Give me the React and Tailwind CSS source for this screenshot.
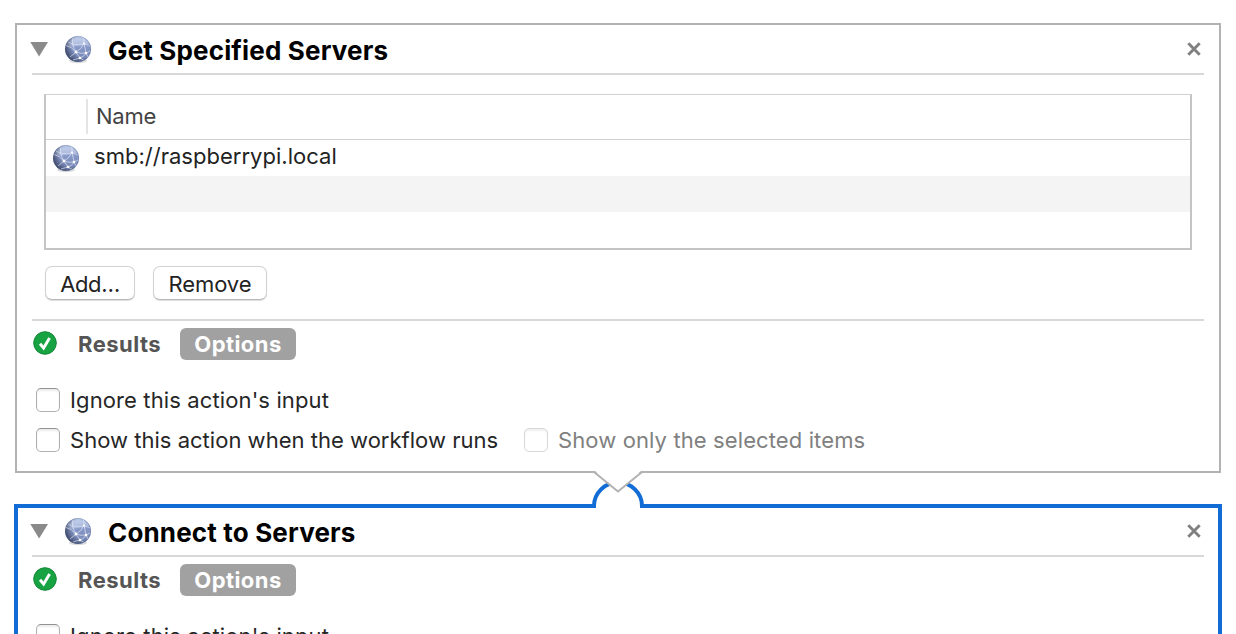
import React from "react";

function Globe() {
  return (
    <svg className="block h-7 w-7 shrink-0 overflow-visible" viewBox="0 0 28 28" fill="none">
      <defs>
        <linearGradient id="globe-body" x1="0.45" y1="0" x2="0.55" y2="1">
          <stop offset="0" stopColor="#bccae8" />
          <stop offset="0.45" stopColor="#8798c6" />
          <stop offset="1" stopColor="#7484b2" />
        </linearGradient>
        <radialGradient id="globe-shade" cx="0.72" cy="0.38" r="0.78">
          <stop offset="0.55" stopColor="#2b3552" stopOpacity="0" />
          <stop offset="1" stopColor="#252c45" stopOpacity="0.8" />
        </radialGradient>
        <clipPath id="globe-clip">
          <circle cx="14" cy="14" r="13" />
        </clipPath>
      </defs>
      <ellipse cx="14" cy="25.8" rx="9" ry="2.4" fill="#000" opacity="0.14" />
      <circle cx="14" cy="14" r="13" fill="url(#globe-body)" />
      <g clipPath="url(#globe-clip)">
        <path d="M2 9C8 2 20 1 26 9L20 10L6 12Z" fill="#dce5f8" opacity="0.35" />
        <circle cx="14" cy="14" r="13" fill="url(#globe-shade)" />
        <g stroke="#eef3ff" strokeWidth="0.8" opacity="0.75">
          <path d="M1 10Q8 12 12 17Q18 14 20 8Q21 4 18 1" />
          <path d="M9 3Q7 9 12 17L16 23Q20 22 22 18L20 8" />
          <path d="M12 17Q17 19 22 18L26 16M12 17L6 22M16 23L9 25M16 23L21 26M22 18L24 22" />
          <path d="M4 7Q10 11 20 9L26 11" strokeWidth="0.6" />
        </g>
        <g fill="#fff">
          <circle cx="12" cy="17" r="1.4" />
          <circle cx="20" cy="8.5" r="1" />
          <circle cx="22" cy="18" r="1.3" />
          <circle cx="16" cy="23" r="1.3" />
        </g>
      </g>
      <circle cx="14" cy="14" r="12.7" stroke="#55638e" strokeWidth="0.6" opacity="0.5" />
    </svg>
  );
}

function Header({ title }) {
  return (
    <div className="mx-[15px] flex h-[50px] items-center border-b-2 border-[#d8d8d8]">
      <svg className="-ml-0.5 h-4 w-[18px]" viewBox="0 0 18 16">
        <path d="M0.3 1H18L9.1 15.5Z" fill="#8a8a8a" />
      </svg>
      <div className="ml-4">
        <Globe />
      </div>
      <h2 className="mt-[3px] ml-4 text-[26px] leading-8 font-bold tracking-[0.16px] whitespace-nowrap text-black">{title}</h2>
      <button className="mr-[3px] ml-auto block" aria-label="Close">
        <svg className="block h-[14px] w-[14px]" viewBox="0 0 14 14">
          <path d="M1.3 1.3L12.7 12.7M12.7 1.3L1.3 12.7" stroke="#808080" strokeWidth="2.9" />
        </svg>
      </button>
    </div>
  );
}

function ResultsBar() {
  return (
    <div className="flex h-8 items-center pl-4">
      <svg className="-mt-0.5 block h-6 w-6" viewBox="0 0 24 24">
        <circle cx="12" cy="12" r="11.3" fill="#18a343" stroke="#158638" strokeWidth="1" />
        <path d="M7 12.8L10.6 17L16.6 6.9" stroke="#fff" strokeWidth="2.9" fill="none" />
      </svg>
      <span className="ml-[21px] w-[102px] text-[22px] leading-8 font-bold tracking-[0.48px] text-[#555]">Results</span>
      <span className="flex h-8 w-[116px] items-center justify-center rounded-md bg-[#a1a1a1] text-[22px] leading-8 font-bold tracking-[0.42px] text-white">
        Options
      </span>
    </div>
  );
}

function Check({ label, disabled, textClass }) {
  return (
    <label className="flex h-6 items-center whitespace-nowrap">
      <span
        className={
          "block h-6 w-6 shrink-0 rounded-[5px] border bg-white " +
          (disabled
            ? "border-[#d9d9d9] shadow-[inset_0_2px_2px_#f1f1f1]"
            : "border-[#b0b0b0] border-t-[#929292] shadow-[inset_0_2px_2px_#ececec]")
        }
      />
      <span className={"ml-2.5 text-[22px] leading-6 " + (disabled ? "text-[#808080] " : "text-[#262626] ") + textClass}>{label}</span>
    </label>
  );
}

function PushButton({ children, className }) {
  return (
    <button
      className={
        "flex h-[34px] items-center justify-center rounded-[7px] border border-[#d2d2d2] border-b-[#b8b8b8] bg-white pt-px text-[22px] leading-8 text-[#222] shadow-[0_1px_1px_#dedede] " +
        className
      }
    >
      {children}
    </button>
  );
}

export default function App() {
  return (
    <div className="relative flex h-[634px] w-[1236px] flex-col overflow-hidden bg-white pt-[23px] font-['Inter','Liberation_Sans',sans-serif]">
      <section className="ml-[15px] h-[450px] w-[1206px] shrink-0 border-2 border-[#b2b2b2]">
        <Header title="Get Specified Servers" />
        <div className="mt-[19px] ml-[27px] h-[156px] w-[1148px] border-2 border-t border-[#c4c4c4] border-t-[#d0d0d0]">
          <div className="flex h-[45px] items-center border-b border-[#d0d0d0] pb-0.5">
            <div className="h-[35px] w-[42px] border-r-2 border-[#e4e4e4]" />
            <span className="ml-2 text-[22px] leading-8 tracking-[-0.25px] text-[#444]">Name</span>
          </div>
          <div className="flex h-9 items-center pl-1.5">
            <Globe />
            <span className="-mt-1 ml-3.5 text-[22px] leading-8 tracking-[0.02px] text-[#222]">smb://raspberrypi.local</span>
          </div>
          <div className="h-9 bg-[#f4f4f4]" />
        </div>
        <div className="mt-4 ml-7 flex gap-[18px]">
          <PushButton className="w-[90px] tracking-[-0.4px]">Add…</PushButton>
          <PushButton className="w-[114px] tracking-[-0.1px]">Remove</PushButton>
        </div>
        <div className="mx-[15px] mt-[19px] mb-[7px] h-0.5 bg-[#d8d8d8]" />
        <ResultsBar />
        <div className="mt-7 flex flex-col gap-4 pl-[19px]">
          <Check label="Ignore this action's input" textClass="tracking-[0.12px]" />
          <div className="flex">
            <div className="w-[488px]">
              <Check label="Show this action when the workflow runs" textClass="tracking-[0.02px]" />
            </div>
            <Check label="Show only the selected items" disabled textClass="tracking-[0.11px]" />
          </div>
        </div>
      </section>

      <section className="mt-[31px] ml-[14px] h-[200px] w-[1208px] shrink-0 border-4 border-[#116cd6]">
        <div className="-mx-px -mt-px">
          <Header title="Connect to Servers" />
          <div className="pt-[7px]">
            <ResultsBar />
          </div>
          <div className="mt-7 pl-[19px]">
            <Check label="Ignore this action's input" textClass="tracking-[0.12px]" />
          </div>
        </div>
      </section>

      <svg className="absolute top-[466px] left-[588px] h-[46px] w-[60px]" viewBox="588 466 60 46" fill="none">
        <path d="M596 509V503L608 484H628L640 503V509Z" fill="#fff" />
        <path d="M594 508V506A24 23.500 0 0 1 642 506V508" stroke="#116cd6" strokeWidth="4" />
        <path d="M594 470L618 492L642 470Z" fill="#fff" />
        <path d="M604 479L618 491L632 479Z" fill="#fff" />
        <path d="M588 472H594L618 491.500L642 472H648" stroke="#b2b2b2" strokeWidth="2" />
      </svg>
    </div>
  );
}
